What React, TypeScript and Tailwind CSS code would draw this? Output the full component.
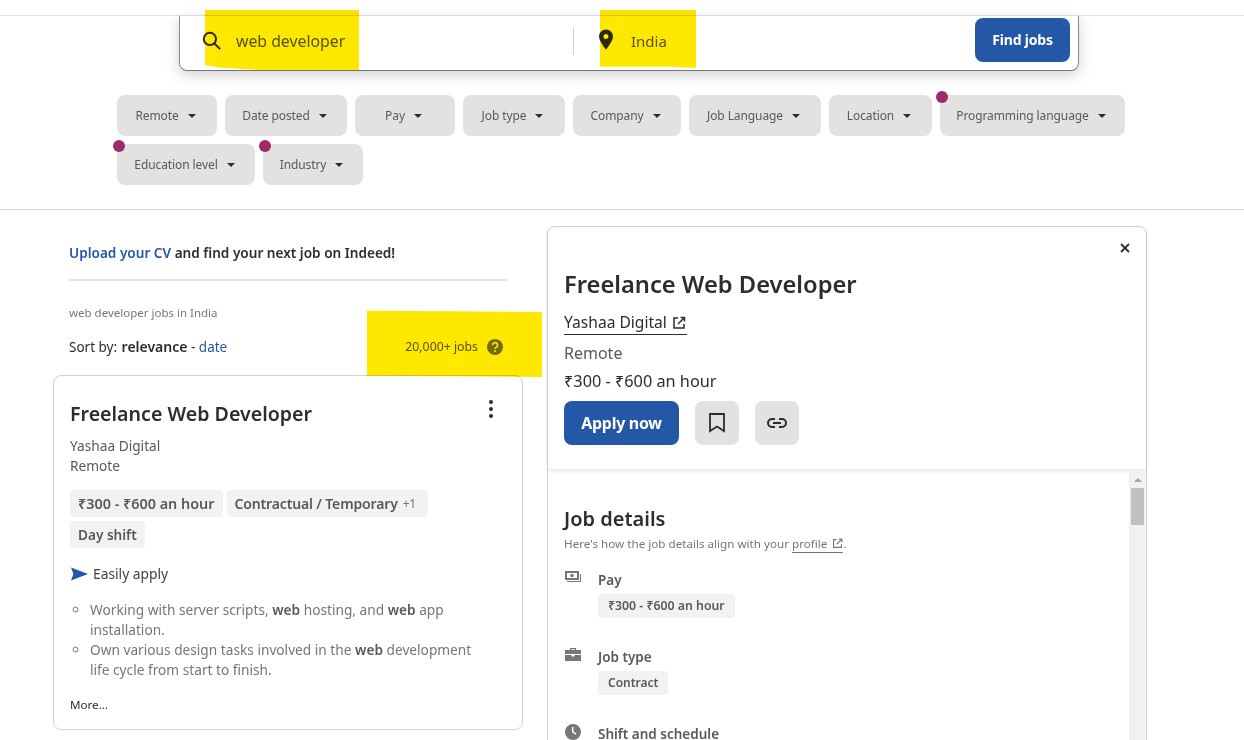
import React from "react";

function Chip({ label, w, dot }: { label: string; w: string; dot?: boolean }) {
  return (
    <div className={`relative flex h-[41px] items-center justify-center gap-[9px] rounded-lg bg-[#e4e2e0] pr-[3px] text-[12px] tracking-[-0.1px] text-[#595959] ${w}`}>
      {dot && <span className="absolute left-[-4px] top-[-4px] h-3 w-3 rounded-full bg-[#9d2b6b]" />}
      <span>{label}</span>
      <span className="h-0 w-0 border-x-4 border-t-[4px] border-x-transparent border-t-[#2d2d2d]" />
    </div>
  );
}

function Tag({ children, cls }: { children: React.ReactNode; cls?: string }) {
  return <span className={`inline-flex items-center rounded bg-[#f3f2f1] font-semibold text-[#595959] ${cls ?? ""}`}>{children}</span>;
}

function Ext({ cls }: { cls?: string }) {
  return (
    <svg viewBox="0 0 14 14" className={cls} fill="none" stroke="currentColor" strokeWidth="1.5">
      <path d="M6 2H2v10h10V8" />
      <path d="M6 8l6.5-6.5M8.5 1.5h4v4" />
    </svg>
  );
}

export default function App() {
  return (
    <div className="relative h-[740px] w-[1244px] overflow-hidden bg-white font-['Noto_Sans',sans-serif] text-[#2d2d2d]">
      <div className="h-[16px] border-b border-[#e4e2e0]" />
      <div className="ml-[179px] flex h-[55px] w-[900px] items-center rounded-b-lg border-x border-b border-x-[#8a8a8a] border-b-[#767676] bg-white pb-[5px] pl-[22px] pr-[8px] shadow-[0_4px_14px_rgba(0,0,0,0.18)]">
        <svg viewBox="0 0 18 18" className="h-[19px] w-[19px]" fill="none" stroke="#2d2d2d" strokeWidth="1.9">
          <circle cx="7.5" cy="7.5" r="5.8" />
          <path d="M11.8 11.8l5.4 5.4" />
        </svg>
        <span className="ml-[15px] mt-[2px] w-[337px] text-[15.8px] text-[#595959]">web developer</span>
        <span className="h-[28px] w-px bg-[#d4d2d0]" />
        <svg viewBox="0 0 14 20" className="mb-[2px] ml-[25px] h-[21px] w-[14px]" fill="#2d2d2d">
          <path fillRule="evenodd" d="M7 0a7 7 0 0 0-7 7c0 4.8 7 13 7 13s7-8.200 7-13a7 7 0 0 0-7-7zm0 9.500a2.500 2.500 0 1 1 0-5 2.500 2.500 0 0 1 0 5z" />
        </svg>
        <span className="ml-[18px] mt-[2px] text-[15px] text-[#595959]">India</span>
        <button className="mb-[2px] ml-auto h-[44px] w-[95px] rounded-lg bg-[#2557a7] text-[14px] font-bold tracking-[-0.2px] text-white">Find jobs</button>
      </div>

      <div className="ml-[117px] mt-[24px] flex w-[1020px] flex-wrap gap-2">
        <Chip label="Remote" w="w-[100px]" />
        <Chip label="Date posted" w="w-[122px]" />
        <Chip label="Pay" w="w-[100px]" />
        <Chip label="Job type" w="w-[102px]" />
        <Chip label="Company" w="w-[108px]" />
        <Chip label="Job Language" w="w-[132px]" />
        <Chip label="Location" w="w-[103px]" />
        <Chip label="Programming language" w="w-[185px]" dot />
        <Chip label="Education level" w="w-[138px]" dot />
        <Chip label="Industry" w="w-[100px]" dot />
      </div>

      <div className="mt-[24px] border-b border-[#d4d2d0]" />

      <div className="flex pl-[53px] pt-[16px]">
        <div className="w-[470px]">
          <div className="mx-[16px] border-b-2 border-[#e4e2e0] pb-[16px] pt-[17px] text-[13.6px] font-semibold leading-[20px]">
            <span className="text-[#2557a7]">Upload your CV</span> and find your next job on Indeed!
          </div>
          <div className="mx-[16px] mt-[24px] text-[11.5px] leading-[16px] text-[#767676]">web developer jobs in India</div>
          <div className="mx-[16px] mt-[15px] flex h-[22px] items-center text-[13.5px]">
            <span>Sort by: <b className="ml-[1px] text-[14px] font-semibold">relevance</b> - <span className="text-[#2557a7]">date</span></span>
            <span className="ml-auto mr-[4px] flex items-center gap-[9px] text-[12.3px] text-[#595959]">
              20,000+ jobs
              <svg viewBox="0 0 16 16" className="h-4 w-4" fill="#767676">
                <circle cx="8" cy="8" r="8" />
                <path d="M5.500 6.200a2.500 2.500 0 1 1 3.600 2.200c-.7.400-1.100.7-1.100 1.500" fill="none" stroke="#ffffff" strokeWidth="1.600" />
                <circle cx="8" cy="12.100" r="1" fill="#ffffff" />
              </svg>
            </span>
          </div>
          <div className="relative mt-[17px] h-[355px] rounded-lg border border-[#d4d2d0] px-[16px] pt-[25px]">
            <span className="absolute right-[29px] top-[24px] flex flex-col gap-[3px]">
              <i className="h-1 w-1 rounded-full bg-[#2d2d2d]" />
              <i className="h-1 w-1 rounded-full bg-[#2d2d2d]" />
              <i className="h-1 w-1 rounded-full bg-[#2d2d2d]" />
            </span>
            <div className="text-[19.6px] font-semibold leading-[26px]">Freelance Web Developer</div>
            <div className="mt-[9px] text-[13.7px] leading-[20px] text-[#595959]">Yashaa Digital</div>
            <div className="text-[13.7px] leading-[20px] text-[#595959]">Remote</div>
            <div className="mt-[14px] flex w-[375px] flex-wrap gap-x-1 gap-y-[4px]">
              <Tag cls="h-[27px] px-2 text-[14.4px]">₹300 - ₹600 an hour</Tag>
              <Tag cls="h-[27px] pl-2 pr-[12px] text-[14px] tracking-[-0.15px]">Contractual / Temporary <span className="ml-[5px] text-[12px] font-normal text-[#767676]">+1</span></Tag>
              <Tag cls="h-[27px] px-2 pt-[1px] text-[13.6px]">Day shift</Tag>
            </div>
            <div className="mt-[16px] flex h-[20px] items-center gap-[5px] text-[13.8px] text-[#424242]">
              <svg viewBox="0 0 18 14" className="ml-[1px] h-[14px] w-[17px]" fill="#2557a7"><path d="M0 0l18 7-18 7 2.500-7z" /></svg>
              Easily apply
            </div>
            <ul className="mt-[16px] list-[circle] pl-[20px] text-[13.7px] leading-[20px] text-[#767676] marker:text-[#767676]">
              <li className="w-[390px]">Working with server scripts, <b className="font-semibold text-[#595959]">web</b> hosting, and <b className="font-semibold text-[#595959]">web</b> app installation.</li>
              <li className="w-[390px]">Own various design tasks involved in the <b className="font-semibold text-[#595959]">web</b> development life cycle from start to finish.</li>
            </ul>
            <div className="mt-[16px] text-[11.6px] leading-[18px] text-[#2d2d2d]">More...</div>
          </div>
        </div>

        <div className="relative ml-[24px] h-[600px] w-[600px] rounded-lg border border-[#d4d2d0]">
          <svg viewBox="0 0 10 10" className="absolute right-[16px] top-[16px] h-[10px] w-[10px]" stroke="#2d2d2d" strokeWidth="1.800"><path d="M1 1l8 8M9 1l-8 8" /></svg>
          <div className="h-[242px] px-[16px] pt-[41px] shadow-[0_2px_4px_rgba(0,0,0,0.1)]">
            <div className="text-[23.7px] font-semibold leading-[32px]">Freelance Web Developer</div>
            <div className="mt-[11px] inline-flex h-[24px] items-center gap-[5px] border-b border-[#2d2d2d] pr-[1px] text-[15.6px] text-[#2d2d2d]">
              Yashaa Digital <Ext cls="h-[14px] w-[14px]" />
            </div>
            <div className="mt-[6px] text-[16px] leading-[24px] text-[#595959]">Remote</div>
            <div className="mt-[4px] text-[16.3px] leading-[24px] text-[#2d2d2d]">₹300 - ₹600 an hour</div>
            <div className="mt-[8px] flex gap-[16px]">
              <button className="h-[44px] w-[115px] rounded-lg bg-[#2557a7] text-[16px] font-bold tracking-[-0.3px] text-white">Apply now</button>
              <span className="flex h-[44px] w-[44px] items-center justify-center rounded-lg bg-[#e4e2e0]">
                <svg viewBox="0 0 16 20" className="h-[20px] w-[16px]" fill="none" stroke="#2d2d2d" strokeWidth="1.800"><path d="M1 1h14v17l-7-4.500L1 18z" /></svg>
              </span>
              <span className="flex h-[44px] w-[44px] items-center justify-center rounded-lg bg-[#e4e2e0]">
                <svg viewBox="0 0 20 10" className="h-[10px] w-[20px]" fill="none" stroke="#2d2d2d" strokeWidth="2"><path d="M8 1H5a4 4 0 0 0 0 8h3M12 1h3a4 4 0 0 1 0 8h-3M6 5h8" /></svg>
              </span>
            </div>
          </div>
          <div className="flex h-[356px] overflow-hidden">
            <div className="flex-1 px-[16px] pt-[37px]">
              <div className="text-[20px] font-semibold leading-[26px]">Job details</div>
              <div className="mt-[3px] text-[11.65px] leading-[18px] text-[#767676]">
                Here's how the job details align with your <span className="border-b border-[#767676] pb-[1px]">profile <Ext cls="mb-[2px] ml-[2px] inline h-[11px] w-[11px]" /></span>.
              </div>
              <div className="mt-[17px] flex">
                <svg viewBox="0 0 16 14" className="ml-[1px] mt-[1px] h-[14px] w-[16px]" fill="#767676"><path fillRule="evenodd" d="M0 0h14v9H0zm2 2v5h10V2zm5 .700a1.800 1.800 0 1 1 0 3.600 1.800 1.800 0 0 1 0-3.600zM15 3h1v8H2v-1h13z" /></svg>
                <div className="ml-[17px]">
                  <div className="text-[13.500px] font-semibold leading-[20px] text-[#595959]">Pay</div>
                  <Tag cls="mt-[4px] h-[24px] px-[10px] text-[12.3px]">₹300 - ₹600 an hour</Tag>
                </div>
              </div>
              <div className="mt-[29px] flex">
                <svg viewBox="0 0 16 14" className="ml-[1px] mt-[1px] h-[14px] w-[16px]" fill="#767676"><path d="M5 2V0h6v2h5v4H0V2zm1.200 0h3.600V1.200H6.200zM0 7h6.500v1.500h3V7H16v6H0z" /></svg>
                <div className="ml-[17px]">
                  <div className="text-[13.500px] font-semibold leading-[20px] text-[#595959]">Job type</div>
                  <Tag cls="mt-[4px] h-[24px] px-[10px] text-[12px]">Contract</Tag>
                </div>
              </div>
              <div className="mt-[29px] flex">
                <svg viewBox="0 0 16 16" className="ml-[1px] h-[16px] w-[16px]" fill="#767676"><path fillRule="evenodd" d="M8 0a8 8 0 1 0 0 16A8 8 0 0 0 8 0zm-1 3h1.500v4.500l3 2-.8 1.200L7 8.200z" /></svg>
                <div className="ml-[17px] text-[13.500px] font-semibold leading-[20px] text-[#595959]">Shift and schedule</div>
              </div>
            </div>
            <div className="relative mt-[2px] w-[17px] bg-[#f1f1f1]">
              <span className="absolute left-[5px] top-[7px] h-0 w-0 border-x-[4px] border-b-[4px] border-x-transparent border-b-[#a3a3a3]" />
              <span className="absolute left-[2px] top-[17px] h-[37px] w-[13px] bg-[#c1c1c1]" />
            </div>
          </div>
        </div>
      </div>

      <div className="pointer-events-none absolute left-[205px] top-[10px] h-[60px] w-[154px] bg-[#ffe800] mix-blend-multiply [clip-path:polygon(0_0,100%_0,100%_100%,35%_100%,10%_96%,0_92%)]" />
      <div className="pointer-events-none absolute left-[600px] top-[10px] h-[58px] w-[96px] bg-[#ffe800] mix-blend-multiply [clip-path:polygon(0_0,100%_0,100%_100%,75%_98%,0_98%)]" />
      <div className="pointer-events-none absolute left-[367px] top-[310px] h-[67px] w-[175px] bg-[#ffe800] mix-blend-multiply [clip-path:polygon(0_1%,50%_2%,100%_3%,100%_100%,50%_99%,0_98%)]" />
    </div>
  );
}
